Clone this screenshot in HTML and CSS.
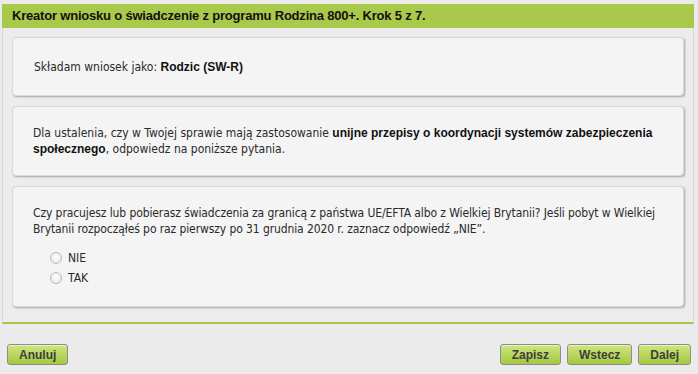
FILE: index.html
```html
<!DOCTYPE html>
<html lang="pl">

<head>
    <meta charset="UTF-8">
    <title>Kreator wniosku - Rodzina 800+</title>
    <link rel="stylesheet" href="styles.css">
</head>

<body>
    <div class="wizard">
        <div class="wizard-header">Kreator wniosku o świadczenie z programu Rodzina 800+. Krok 5 z 7.</div>
        <div class="wizard-body">
            <div class="card card-role">
                Składam wniosek jako: <b>Rodzic (SW-R)</b>
            </div>
            <div class="card">
                <p>Dla ustalenia, czy w Twojej sprawie mają zastosowanie <b>unijne przepisy o koordynacji systemów zabezpieczenia</b> <b>społecznego</b>, odpowiedz na poniższe pytania.</p>
            </div>
            <div class="card">
                <p class="question">Czy pracujesz lub pobierasz świadczenia za granicą z państwa UE/EFTA albo z Wielkiej Brytanii? Jeśli pobyt w Wielkiej Brytanii rozpocząłeś po raz pierwszy po 31 grudnia 2020 r. zaznacz odpowiedź „NIE”.</p>
                <ul class="options">
                    <li><label><span class="radio"></span>NIE</label></li>
                    <li><label><span class="radio"></span>TAK</label></li>
                </ul>
            </div>
        </div>
    </div>
    <!-- przyciski nawigacji -->
    <div class="btnBar">
        <button>Anuluj</button>
        <span class="spacer"></span>
        <button>Zapisz</button>
        <button>Wstecz</button>
        <button>Dalej</button>
    </div>
</body>
</html>
```

FILE: styles.css
```css
* {
    margin: 0;
    padding: 0;
    box-sizing: border-box;
}

body {
    background-color: #ebebeb;
    font-family: "DejaVu Sans Condensed", "DejaVu Sans", sans-serif;
    font-size: 12px;
    color: #2a2a2a;
}

b {
    font-family: "Liberation Sans", Arial, sans-serif;
    font-weight: bold;
    color: #111;
}

.wizard {
    margin: 4px 4px 0 2px;
    border: 1px solid #d9d9d9;
    border-top: none;
    border-bottom: 2px solid #a6c845;
    background-color: #ececec;
}

.wizard-header {
    height: 24px;
    line-height: 24px;
    padding-left: 10px;
    margin: 0 -1px;
    background-color: #a9c94a;
    font-family: "Liberation Sans", Arial, sans-serif;
    font-weight: bold;
    font-size: 13px;
    letter-spacing: -0.2px;
    color: #111;
}

.wizard-body {
    display: flex;
    flex-direction: column;
    gap: 10px;
    padding: 9px 9px 15px 9px;
}

.card {
    background-color: #f4f4f4;
    border: 1px solid #dadada;
    border-radius: 4px;
    box-shadow: 1px 1px 2px rgba(0, 0, 0, 0.3);
    padding: 18px 14px 18px 20px;
    line-height: 16px;
}

.card-role {
    padding: 21px 21px 20px 21px;
}

.question {
    letter-spacing: -0.1px;
}

.options {
    list-style: none;
    margin-top: 11px;
    padding-left: 17px;
}

.options li {
    height: 20px;
    line-height: 20px;
}

.options label {
    display: flex;
    align-items: center;
}

.radio {
    width: 12px;
    height: 12px;
    margin-right: 6px;
    border: 1px solid #b9b9b9;
    border-radius: 50%;
    background: radial-gradient(circle at 50% 40%, #ffffff, #e2e2e2);
}

.btnBar {
    display: flex;
    gap: 6px;
    padding: 20px 7px 0 7px;
}

.btnBar .spacer {
    flex: 1;
}

.btnBar button {
    height: 21px;
    padding: 0 11px;
    border: 1px solid #8d8d8d;
    border-radius: 3px;
    background: linear-gradient(#cfe57f, #a3c940);
    box-shadow: inset 0 1px 0 rgba(255, 255, 255, 0.5);
    font-family: "Liberation Sans", Arial, sans-serif;
    font-size: 12px;
    font-weight: bold;
    color: #3e3e3e;
}
```
